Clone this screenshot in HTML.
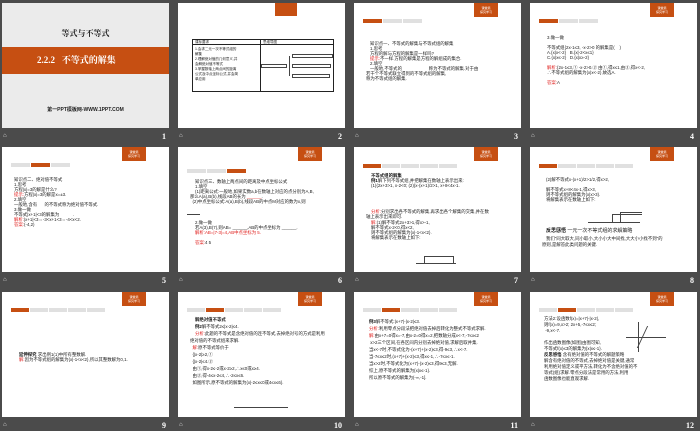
<!DOCTYPE html>
<html><head><meta charset="utf-8"><style>
*{margin:0;padding:0;box-sizing:border-box}
body{width:700px;height:431px;background:#4b4b4b;position:relative;overflow:hidden;font-family:"Liberation Sans","Noto Sans CJK SC",sans-serif}
.s{position:absolute;width:167px;height:125px;background:#fff;overflow:hidden}
.lbl{position:absolute;width:167px;height:10px;color:#fff;font-size:8px;font-weight:bold}
.lbl .n{position:absolute;right:3px;top:0;font-family:"Liberation Serif",serif}
.lbl .i{position:absolute;left:1px;top:1px;font-size:6px;font-weight:normal;color:#ddd}
.b{position:absolute;right:23px;top:0;width:24px;height:14px;background:#c64f12;color:#fff;font-size:3px;text-align:center;line-height:4px;padding-top:3px}
.tabs{position:absolute;left:12px;top:23px;height:4px;display:flex}
.tabs span{display:block;height:4px;background:#e0e0e0;margin-right:1px}
.tabs span.o{background:#c64f12}
.t{position:absolute;font-size:4.4px;color:#222;white-space:nowrap;line-height:5px}
.r{color:#e0201e}
.bd{font-weight:bold;color:#111}
.ln{position:absolute;height:1px;background:#444}
</style></head><body>

<!-- Slide 1 -->
<div class="s" style="left:2px;top:3px;background:#ebebeb">
<div style="position:absolute;top:25px;width:100%;text-align:center;font-size:8px;font-weight:bold;color:#222;font-family:'Liberation Serif','Noto Serif CJK SC',serif">等式与不等式</div>
<div style="position:absolute;top:44px;left:0;width:167px;height:27px;background:#c64f12;color:#fff;font-size:9px;font-weight:bold;line-height:27px;padding-left:35px;font-family:'Liberation Serif','Noto Serif CJK SC',serif">2.2.2&nbsp;&nbsp; 不等式的解集</div>
<div style="position:absolute;top:103px;width:100%;text-align:center;font-size:5px;font-weight:bold;color:#222">第一PPT模板网-WWW.1PPT.COM</div>
</div>
<div class="lbl" style="left:2px;top:132px"><span class="i">⌂</span><span class="n">1</span></div>

<!-- Slide 2 -->
<div class="s" style="left:178px;top:3px">
<div class="b" style="height:13px;width:22px;right:48px"></div>
<div style="position:absolute;left:14px;top:36px;width:142px;height:53px;border:1px solid #222">
<div style="position:absolute;left:0;top:0;width:140px;height:5px;border-bottom:1px solid #222"></div>
<div style="position:absolute;left:67px;top:0;width:1px;height:51px;background:#222"></div>
<div class="t" style="left:2px;top:0;font-size:3.5px">课标要求</div><div class="t" style="left:70px;top:0;font-size:3.5px">思维导图</div>
<div class="t" style="left:2px;top:7px;font-size:3.5px;line-height:5px">1.会求二元一次不等式组的<br>解集<br>2.理解绝对值的几何意义,并<br>会解绝对值不等式<br>3.掌握数轴上两点间的距离<br>公式及中点坐标公式,并会简<br>单应用</div>
<div style="position:absolute;left:68px;top:24px;width:26px;height:4px;border:1px solid #444"></div>
<div style="position:absolute;left:99px;top:14px;width:41px;height:4px;border:1px solid #444"></div>
<div style="position:absolute;left:99px;top:24px;width:39px;height:4px;border:1px solid #444"></div>
<div style="position:absolute;left:99px;top:34px;width:38px;height:4px;border:1px solid #444"></div>
<div style="position:absolute;left:96px;top:16px;width:1px;height:20px;background:#444"></div>
</div>
</div>
<div class="lbl" style="left:178px;top:132px"><span class="i">⌂</span><span class="n">2</span></div>

<!-- Slide 3 -->
<div class="s" style="left:354px;top:3px">
<div class="b">课堂篇<br>探究学习</div>
<div class="tabs" style="top:16px;left:9px"><span class="o" style="width:19px"></span><span style="width:19px"></span><span style="width:19px"></span></div>
<div class="t" style="left:16px;top:38px">知识点一、不等式的解集与不等式组的解集<br>1.思考<br>方程的解与方程的解集是一样吗?<br><span class="r">提示:</span>不一样.方程的解集是方程的解组成的集合.<br>2.填空<br>一般地,不等式的 &nbsp;&nbsp;&nbsp;&nbsp;&nbsp;&nbsp;&nbsp;&nbsp;&nbsp;&nbsp;&nbsp;&nbsp;&nbsp;&nbsp;&nbsp;&nbsp;&nbsp;&nbsp;&nbsp;&nbsp;&nbsp;称为不等式的解集.对于由</div>
<div class="t" style="left:12px;top:68px">若干个不等式联立得到的不等式组的解集,<br>称为不等式组的解集.</div>
</div>
<div class="lbl" style="left:354px;top:132px"><span class="i">⌂</span><span class="n">3</span></div>

<!-- Slide 4 -->
<div class="s" style="left:530px;top:3px">
<div class="b">课堂篇<br>探究学习</div>
<div class="tabs" style="top:16px;left:9px"><span class="o" style="width:19px"></span><span style="width:19px"></span><span style="width:19px"></span></div>
<div class="t" style="left:17px;top:32px">3.做一做<br><br>不等式组{2x-1≤3, -x-2&gt;0 的解集是( &nbsp;&nbsp;&nbsp;)<br>A.{x|x&lt;-2} &nbsp;&nbsp;B.{x|-2&lt;x≤1}<br>C.{x|x≤-2} &nbsp;&nbsp;D.{x|x≥-2}<br><br><span class="r">解析:</span>{2x-1≤3,① -x-2&gt;0.② 由①,得x≤1,由②,得x&lt;-2,<br>∴不等式组的解集为{x|x&lt;-2},故选A.<br><br><span class="r">答案:</span>A</div>
</div>
<div class="lbl" style="left:530px;top:132px"><span class="i">⌂</span><span class="n">4</span></div>

<!-- Slide 5 -->
<div class="s" style="left:2px;top:147px">
<div class="b">课堂篇<br>探究学习</div>
<div class="tabs" style="top:16px;left:9px"><span style="width:19px"></span><span class="o" style="width:19px"></span><span style="width:19px"></span></div>
<div class="t" style="left:12px;top:30px">知识点二、绝对值不等式<br>1.思考<br>方程|x|=3的解是什么?<br><span class="r">提示:</span>方程|x|=3的解是x=±3.<br>2.填空<br>一般地,含有 &nbsp;&nbsp;&nbsp;&nbsp;&nbsp;的不等式称为绝对值不等式.<br>3.做一做<br>不等式|x+1|&lt;3的解集为 &nbsp;&nbsp;&nbsp;&nbsp;&nbsp;&nbsp;&nbsp;&nbsp;&nbsp;&nbsp;.<br><span class="r">解析:</span>|x+1|&lt;3⇔-3&lt;x+1&lt;3⇔-4&lt;x&lt;2.<br><span class="r">答案:</span>(-4,2)</div>
</div>
<div class="lbl" style="left:2px;top:276px"><span class="i">⌂</span><span class="n">5</span></div>

<!-- Slide 6 -->
<div class="s" style="left:178px;top:147px">
<div class="b">课堂篇<br>探究学习</div>
<div class="tabs" style="top:22px;left:9px"><span style="width:19px"></span><span style="width:19px"></span><span class="o" style="width:19px"></span></div>
<div class="t" style="left:17px;top:32px">知识点三、数轴上两点间的距离及中点坐标公式<br>1.填空<br>(1)距离公式:一般地,如果实数a,b在数轴上对应的点分别为A,B,</div>
<div class="t" style="left:12px;top:47px">那么A(a),B(b),线段AB的长为 <span class="r">______</span>.<br>&nbsp;&nbsp;(2)中点坐标公式:A(a),B(b),线段AB的中点M对应的数为x,则</div>
<div class="ln" style="left:9px;top:67px;width:13px"></div>
<div class="t" style="left:17px;top:73px">2.做一做<br>若A(3),B(7),则AB= ______,AB的中点坐标为 ______.<br><span class="r">解析:AB=|7-3|=4,AB中点坐标为 5.</span><br><br><span class="r">答案:</span>4 5</div>
</div>
<div class="lbl" style="left:178px;top:276px"><span class="i">⌂</span><span class="n">6</span></div>

<!-- Slide 7 -->
<div class="s" style="left:354px;top:147px">
<div class="b">课堂篇<br>探究学习</div>
<div class="tabs" style="top:17px;left:9px"><span class="o" style="width:18px"></span><span style="width:18px"></span><span style="width:18px"></span><span style="width:18px"></span><span style="width:18px"></span></div>
<div class="t" style="left:17px;top:26px"><span class="bd">不等式组的解集</span><br><span class="bd">例1</span>解下列不等式组,并把解集在数轴上表示出来:<br>(1){2x+3&gt;1, x-2&lt;0; (2){x-(x+1)/2&gt;1, x+8&lt;4x-1.</div>
<div class="t" style="left:17px;top:62px"><span class="r">分析:</span>分别求出各不等式的解集,再求出各个解集的交集,并在数</div>
<div class="t" style="left:12px;top:67px">轴上表示出来即可.</div>
<div class="t" style="left:17px;top:73px"><span class="r">解:</span>(1)解不等式2x+3&gt;1,得x&gt;-1,<br>解不等式x-2&lt;0,得x&lt;2,<br>则不等式组的解集为{x|-1&lt;x&lt;2}.<br>将解集表示在数轴上如下:</div>
<div class="ln" style="left:62px;top:116px;width:40px"></div>
<div style="position:absolute;left:70px;top:109px;width:30px;height:7px;border:1px solid #444;border-bottom:none"></div>
</div>
<div class="lbl" style="left:354px;top:276px"><span class="i">⌂</span><span class="n">7</span></div>

<!-- Slide 8 -->
<div class="s" style="left:530px;top:147px">
<div class="b">课堂篇<br>探究学习</div>
<div class="tabs" style="top:17px;left:9px"><span class="o" style="width:18px"></span><span style="width:18px"></span><span style="width:18px"></span><span style="width:18px"></span><span style="width:18px"></span></div>
<div class="t" style="left:16px;top:30px">(2)解不等式x-(x+1)/2&gt;1/2,得x&gt;2,<br><br>解不等式x+8&lt;4x-1,得x&gt;3,<br>则不等式组的解集为{x|x&gt;3}.<br>将解集表示在数轴上如下:</div>
<div class="ln" style="left:58px;top:75px;width:52px"></div>
<div style="position:absolute;left:82px;top:67px;width:30px;height:8px;border-top:1px solid #444;border-left:1px solid #444"></div>
<div style="position:absolute;left:90px;top:65px;width:22px;height:10px;border-top:1px solid #444;border-left:1px solid #444"></div>
<div class="t" style="left:16px;top:82px;font-size:5px"><span class="bd">反思感悟</span> 一元一次不等式组的求解策略</div>
<div class="t" style="left:16px;top:89px">我们"同大取大,同小取小,大小小大中间找,大大小小找不到"的</div>
<div class="t" style="left:12px;top:95px">原则,是解答此类问题的关键.</div>
</div>
<div class="lbl" style="left:530px;top:276px"><span class="i">⌂</span><span class="n">8</span></div>

<!-- Slide 9 -->
<div class="s" style="left:2px;top:292px">
<div class="b">课堂篇<br>探究学习</div>
<div class="tabs" style="top:16px;left:9px"><span class="o" style="width:18px"></span><span style="width:18px"></span><span style="width:18px"></span><span style="width:18px"></span><span style="width:18px"></span></div>
<div class="t" style="left:17px;top:60px"><span class="bd">延伸探究</span> 求出例1(1)中所有整数解.<br><span class="r">解:</span>因为不等式组的解集为{x|-1&lt;x&lt;2},所以其整数解为0,1.</div>
</div>
<div class="lbl" style="left:2px;top:421px"><span class="i">⌂</span><span class="n">9</span></div>

<!-- Slide 10 -->
<div class="s" style="left:178px;top:292px">
<div class="b">课堂篇<br>探究学习</div>
<div class="tabs" style="top:16px;left:9px"><span style="width:18px"></span><span class="o" style="width:18px"></span><span style="width:18px"></span><span style="width:18px"></span><span style="width:18px"></span></div>
<div class="t" style="left:17px;top:24px;line-height:7px"><span class="bd">解绝对值不等式</span><br><span class="bd">例2</span>解不等式2≤|x-2|≤4.<br><span class="r">分析:</span>此题的不等式是含绝对值的连不等式,去掉绝对号的方式是利用</div>
<div class="t" style="left:12px;top:45px;line-height:7px">绝对值的不等式组来求解.<br>&nbsp;&nbsp;<span class="r">解:</span>原不等式等价于<br>&nbsp;&nbsp;{|x-2|≥2,①<br>&nbsp;&nbsp;{|x-2|≤4.②<br>&nbsp;&nbsp;由①,得x-2≤-2或x-2≥2,∴x≤0或x≥4.<br>&nbsp;&nbsp;由②,得-4≤x-2≤4,∴-2≤x≤6.<br>&nbsp;&nbsp;如图所示,原不等式的解集为{x|-2≤x≤0或4≤x≤6}.</div>
<div class="ln" style="left:56px;top:115px;width:54px"></div>
</div>
<div class="lbl" style="left:178px;top:421px"><span class="i">⌂</span><span class="n">10</span></div>

<!-- Slide 11 -->
<div class="s" style="left:354px;top:292px">
<div class="b">课堂篇<br>探究学习</div>
<div class="tabs" style="top:16px;left:9px"><span style="width:18px"></span><span class="o" style="width:18px"></span><span style="width:18px"></span><span style="width:18px"></span><span style="width:18px"></span></div>
<div class="t" style="left:15px;top:26px;line-height:7px"><span class="bd">例3</span>解不等式:|x+7|-|x-2|≤3.<br><span class="r">分析:</span>利用零点分段法把绝对值去掉后转化为整式不等式求解.<br><span class="r">解:</span>由x+7=0得x=-7,由x-2=0得x=2,把数轴分成x&lt;-7,-7≤x≤2<br>&nbsp;x&gt;2三个区间,在各区间内分别去掉绝对值,求解后取并集.<br>当x&lt;-7时,不等式化为-(x+7)+(x-2)≤3,得-9≤3,∴x&lt;-7.<br>当-7≤x≤2时,(x+7)+(x-2)≤3,得x≤-1,∴-7≤x≤-1.<br>当x&gt;2时,不等式化为(x+7)-(x-2)≤3,得9≤3,无解.<br>综上,原不等式的解集为{x|x≤-1}.<br>所以原不等式的解集为(-∞,-1].</div>
</div>
<div class="lbl" style="left:354px;top:421px"><span class="i">⌂</span><span class="n">11</span></div>

<!-- Slide 12 -->
<div class="s" style="left:530px;top:292px">
<div class="b">课堂篇<br>探究学习</div>
<div class="tabs" style="top:16px;left:9px"><span style="width:18px"></span><span class="o" style="width:18px"></span><span style="width:18px"></span><span style="width:18px"></span><span style="width:18px"></span></div>
<div class="t" style="left:14px;top:24px;line-height:6px">方法2:设函数f(x)=|x+7|-|x-2|,<br>则f(x)=9,x&gt;2; 2x+5,-7≤x≤2;<br>&nbsp;-9,x&lt;-7.<br><br>作出函数图像(如图)由图可知,<br>不等式f(x)≤3的解集为{x|x≤-1}.<br><span class="bd">反思感悟</span> 含有绝对值的不等式的解题策略<br>解含有绝对值的不等式,去掉绝对值是关键,通常<br>利用绝对值定义或平方法,转化为不含绝对值的不<br>等式(组)求解.零点分段法是常用的方法,利用<br>函数图像也能直观求解.</div>
<div style="position:absolute;left:108px;top:30px;width:1px;height:30px;background:#444"></div>
<div style="position:absolute;left:96px;top:45px;width:40px;height:1px;background:#444"></div>
<div style="position:absolute;left:112px;top:34px;width:18px;height:22px;border-left:1px solid #444;transform:skewX(-25deg)"></div>
</div>
<div class="lbl" style="left:530px;top:421px"><span class="i">⌂</span><span class="n">12</span></div>

</body></html>
